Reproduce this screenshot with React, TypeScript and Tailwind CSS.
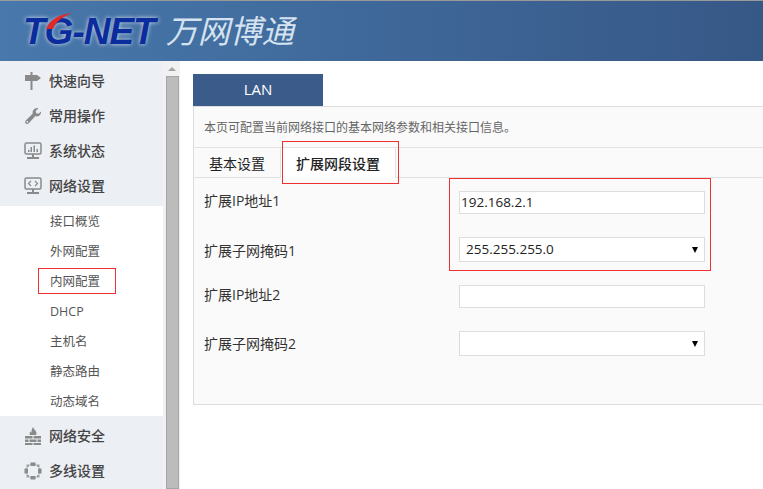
const CJK = "font-['Open_Sans','Noto_Sans_CJK_SC',sans-serif]";

const SignIcon = () => (
  <svg width="18" height="18" viewBox="0 0 18 18" fill="#8a8a8a">
    <path d="M1 3h12l4 3-4 3H1z" />
    <rect x="6.5" y="0" width="2" height="3" />
    <rect x="6.5" y="9" width="2" height="9" />
  </svg>
);

const WrenchIcon = () => (
  <svg width="18" height="18" viewBox="0 0 18 18" fill="#8a8a8a">
    <path d="M17 4.5c.4 2.400-1.500 4.900-4 4.900-.6 0-1.100-.1-1.600-.3L4.800 16.300c-.9 1-2.300 1-3.100.1-.9-.9-.8-2.200.1-3l7-6.800c-.7-2.700 1.400-5.600 4.400-5.600.4 0 .8 0 1.200.2l-2.700 2.700.5 2.300 2.300.5z" />
    <circle cx="3.300" cy="14.800" r=".9" fill="#eceff4" />
  </svg>
);

const MonitorChartIcon = () => (
  <svg width="18" height="18" viewBox="0 0 18 18">
    <rect x="1" y="1" width="16" height="11" rx="1.500" fill="none" stroke="#8a8a8a" strokeWidth="1.500" />
    <path d="M4 10V8h1.500v2zM6.500 10V5H8v5zM9.500 10V3.500H11V10zM12.500 10V7H14v3z" fill="#8a8a8a" />
    <rect x="8" y="12" width="2" height="3" fill="#8a8a8a" />
    <rect x="3" y="15" width="12" height="2" fill="#8a8a8a" />
  </svg>
);

const MonitorCodeIcon = () => (
  <svg width="18" height="18" viewBox="0 0 18 18">
    <rect x="1" y="1" width="16" height="11" rx="1.500" fill="none" stroke="#8a8a8a" strokeWidth="1.500" />
    <path d="M7 4 4.500 6.500 7 9M11 4l2.500 2.500L11 9" fill="none" stroke="#8a8a8a" strokeWidth="1.200" />
    <rect x="8" y="12" width="2" height="3" fill="#8a8a8a" />
    <rect x="3" y="15" width="12" height="2" fill="#8a8a8a" />
  </svg>
);

const FirewallIcon = () => (
  <svg width="18" height="18" viewBox="0 0 18 18" fill="#8a8a8a">
    <path d="M9 0c.5 2 3.500 3.500 3.500 6.500 0 .7-.2 1.100-.4 1.500H5.900c-.5-1.200-.3-2.500.6-3.500.2.600.5 1 .9 1.200C7.300 3.700 8 1.800 9 0z" />
    <rect x="1" y="9" width="7.500" height="2.500" />
    <rect x="9.500" y="9" width="7.500" height="2.500" />
    <rect x="1" y="12.500" width="3.500" height="2.500" />
    <rect x="5.500" y="12.500" width="7" height="2.500" />
    <rect x="13.500" y="12.500" width="3.500" height="2.500" />
    <rect x="1" y="16" width="7.500" height="2" />
    <rect x="9.500" y="16" width="7.500" height="2" />
  </svg>
);

const MultiLineIcon = () => (
  <svg width="18" height="18" viewBox="0 0 18 18">
    <circle cx="9" cy="9" r="7" fill="none" stroke="#b4b4b4" strokeWidth="1" />
    <rect x="6.500" y="0.500" width="5" height="3.500" fill="#8a8a8a" />
    <rect x="6.500" y="14" width="5" height="3.500" fill="#8a8a8a" />
    <rect x="0.500" y="6.500" width="3.500" height="5" fill="#8a8a8a" />
    <rect x="14" y="6.500" width="3.500" height="5" fill="#8a8a8a" />
    <rect x="2.500" y="2.500" width="2.500" height="2.500" fill="#a0a0a0" />
    <rect x="13" y="2.500" width="2.500" height="2.500" fill="#a0a0a0" />
    <rect x="2.500" y="13" width="2.500" height="2.500" fill="#a0a0a0" />
    <rect x="13" y="13" width="2.500" height="2.500" fill="#a0a0a0" />
  </svg>
);

const MenuItem = ({ icon, label }: { icon: React.ReactNode; label: string }) => (
  <div className="flex h-[35px] items-center gap-[7px] pl-[24px] text-[14px] font-medium text-[#444]">
    {icon}
    <span>{label}</span>
  </div>
);

const subItems = ["接口概览", "外网配置", "内网配置", "DHCP", "主机名", "静态路由", "动态域名"];

const Arrow = () => (
  <div className="h-0 w-0 border-x-[3.500px] border-t-[6px] border-x-transparent border-t-black" />
);

const Row = ({ label, h, labelClass, children }: { label: string; h: string; labelClass: string; children: React.ReactNode }) => (
  <div className={`flex items-center ${h}`}>
    <div className={`w-[265px] pl-[10px] text-[14px] text-[#333] ${labelClass}`}>{label}</div>
    {children}
  </div>
);

const SelectBox = ({ value }: { value?: string }) => (
  <div className="flex h-[25px] w-[246px] items-center justify-between border border-[#ddd] bg-white pl-[6px] pr-[6px] text-[13.500px] text-[#222]">
    <span>{value}</span>
    <Arrow />
  </div>
);

const InputBox = ({ value }: { value?: string }) => (
  <div className="flex h-[23px] w-[246px] items-center border border-[#ddd] bg-white pl-[1px] text-[13.500px] text-[#222]">
    {value}
  </div>
);

export default function App() {
  return (
    <div className={`flex h-[489px] w-[763px] flex-col overflow-hidden bg-white ${CJK}`}>
      {/* Header */}
      <div className="flex h-[61px] shrink-0 items-center border-t border-[#999] bg-gradient-to-r from-[#4878ac] to-[#365887] pl-[23px]">
        <div className="relative font-['Liberation_Sans',sans-serif] text-[37px] font-bold italic leading-none tracking-[-1px] text-[#0a2c9c] [text-shadow:0_0_4px_#ffffffcc]">
          TG-NET
          <svg className="absolute left-[21px] top-[-1px]" width="30" height="18" viewBox="0 0 30 18">
            <path d="M2 17C7 6 15 3 28 1 19 5 12 9 9 17z" fill="#e02a2a" />
          </svg>
        </div>
        <div className="ml-[11px] text-[32px] font-normal italic leading-none text-[#d5e2ef]">万网博通</div>
      </div>

      <div className="flex min-h-0 flex-1">
        {/* Sidebar */}
        <div className="w-[163px] shrink-0 bg-[#eceff4] pt-[2px]">
          <MenuItem icon={<SignIcon />} label="快速向导" />
          <MenuItem icon={<WrenchIcon />} label="常用操作" />
          <MenuItem icon={<MonitorChartIcon />} label="系统状态" />
          <MenuItem icon={<MonitorCodeIcon />} label="网络设置" />
          <div className="mt-[3px] h-[210px] bg-white pt-[1px]">
            {subItems.map((s) => (
              <div key={s} className="relative flex h-[30px] items-center pl-[50px] text-[12.500px] text-[#555]">
                {s}
                {s === "内网配置" && (
                  <div className="absolute left-[38px] top-[1px] h-[26px] w-[78px] border border-[#f03030]" />
                )}
              </div>
            ))}
          </div>
          <div className="mt-[2px]">
            <MenuItem icon={<FirewallIcon />} label="网络安全" />
            <MenuItem icon={<MultiLineIcon />} label="多线设置" />
          </div>
        </div>

        {/* Scrollbar */}
        <div className="flex w-[17px] shrink-0 flex-col items-center bg-[#f1f1f1] pl-[1px]">
          <div className="mb-[5px] mt-[6px] h-0 w-0 border-x-[4px] border-b-[4px] border-x-transparent border-b-[#a3a3a3]" />
          <div className="w-[13px] flex-1 border border-[#a6a6a6] bg-[#bcbcbc]" />
        </div>

        {/* Content */}
        <div className="min-w-0 flex-1 pl-[13px] pt-[13px]">
          <div className="flex h-[32px] w-[130px] items-center justify-center bg-[#3b5c8a] pb-[1px] text-[15px] text-white">LAN</div>
          <div className="relative h-[299px] w-[600px] border border-[#ddd] bg-[#fafafa]">
            <div className="flex h-[40px] items-center pl-[10px] pt-[1px] text-[12px] text-[#666]">
              本页可配置当前网络接口的基本网络参数和相关接口信息。
            </div>
            <div className="flex h-[31px] border-y border-[#e2e2e2]">
              <div className="flex w-[87px] items-center justify-center border-r border-[#e2e2e2] pt-[1px] text-[14px] text-[#222]">基本设置</div>
              <div className="mb-[-1px] flex w-[115px] items-center justify-center border-r border-[#e2e2e2] bg-white pt-[1px] text-[14px] font-medium text-[#222]">扩展网段设置</div>
            </div>
            <div className="pt-[13px]">
              <Row label="扩展IP地址1" h="h-[23px]" labelClass="pb-[4px]"><InputBox value="192.168.2.1" /></Row>
              <div className="mt-[23px]"><Row label="扩展子网掩码1" h="h-[25px]" labelClass="pt-[1px]"><SelectBox value="255.255.255.0" /></Row></div>
              <div className="mt-[23px]"><Row label="扩展IP地址2" h="h-[23px]" labelClass="pb-[5px]"><InputBox /></Row></div>
              <div className="mt-[23px]"><Row label="扩展子网掩码2" h="h-[25px]" labelClass=""><SelectBox /></Row></div>
            </div>
            {/* red highlight boxes */}
            <div className="absolute left-[88px] top-[34px] h-[43px] w-[117px] border border-[#f03030]" />
            <div className="absolute left-[255px] top-[71px] h-[93px] w-[262px] border border-[#f03030]" />
          </div>
        </div>
      </div>
    </div>
  );
}
